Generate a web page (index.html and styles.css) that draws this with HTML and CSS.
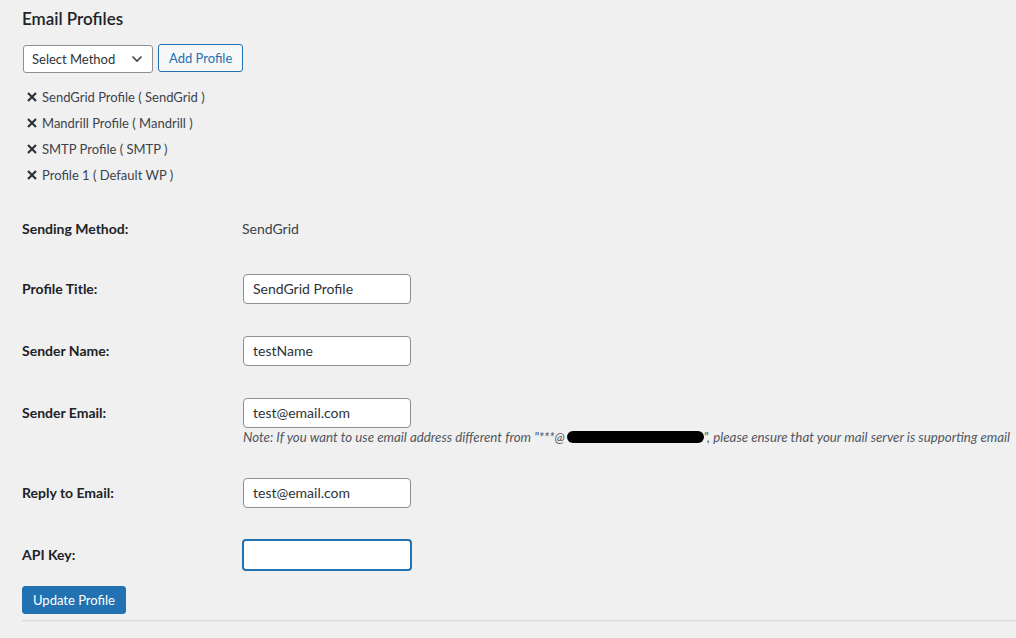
FILE: index.html
```html
<!DOCTYPE html>
<html>
<head>
<meta charset="utf-8">
<link rel="stylesheet" href="styles.css">
</head>
<body>
<div class="wrap">
  <h2 class="title">Email Profiles</h2>
  <div class="toolbar">
    <div class="select">
      <span>Select Method</span>
      <svg class="chev" width="12" height="8" viewBox="0 0 12 8"><path d="M1.5 1.5 L6 6 L10.5 1.5" fill="none" stroke="#3c434a" stroke-width="1.6"/></svg>
    </div>
    <button class="btn-secondary">Add Profile</button>
  </div>
  <ul class="profiles">
    <li><svg class="x" width="10" height="10" viewBox="0 0 10 10"><path d="M1 1 L9 9 M9 1 L1 9" stroke="#2c3338" stroke-width="2.2"/></svg>SendGrid Profile ( SendGrid )</li>
    <li><svg class="x" width="10" height="10" viewBox="0 0 10 10"><path d="M1 1 L9 9 M9 1 L1 9" stroke="#2c3338" stroke-width="2.2"/></svg>Mandrill Profile ( Mandrill )</li>
    <li><svg class="x" width="10" height="10" viewBox="0 0 10 10"><path d="M1 1 L9 9 M9 1 L1 9" stroke="#2c3338" stroke-width="2.2"/></svg>SMTP Profile ( SMTP )</li>
    <li><svg class="x" width="10" height="10" viewBox="0 0 10 10"><path d="M1 1 L9 9 M9 1 L1 9" stroke="#2c3338" stroke-width="2.2"/></svg>Profile 1 ( Default WP )</li>
  </ul>
  <div class="form">
    <div class="row row-first">
      <div class="label">Sending Method:</div>
      <div class="field"><span class="value">SendGrid</span></div>
    </div>
    <div class="row">
      <div class="label">Profile Title:</div>
      <div class="field"><div class="input">SendGrid Profile</div></div>
    </div>
    <div class="row">
      <div class="label">Sender Name:</div>
      <div class="field"><div class="input">testName</div></div>
    </div>
    <div class="row">
      <div class="label">Sender Email:</div>
      <div class="field">
        <div class="input">test@email.com</div>
        <p class="note">Note: If you want to use email address different from "***@<span class="redact"></span>", please ensure that your mail server is supporting email</p>
      </div>
    </div>
    <div class="row">
      <div class="label">Reply to Email:</div>
      <div class="field"><div class="input">test@email.com</div></div>
    </div>
    <div class="row">
      <div class="label">API Key:</div>
      <div class="field"><div class="input focus"></div></div>
    </div>
  </div>
  <button class="btn-primary">Update Profile</button>
  <div class="divider"></div>
</div>
</body>
</html>
```
FILE: styles.css
```css
html, body {
  margin: 0;
  padding: 0;
  background: #f0f0f1;
  overflow: hidden;
}
body {
  font-family: "Lato", "Liberation Sans", sans-serif;
  font-size: 13px;
  color: #3c434a;
}
.wrap {
  padding: 8px 0 0 22px;
  white-space: nowrap;
}
.title {
  margin: 0;
  font-size: 17px;
  line-height: 22px;
  font-weight: 600;
  color: #1d2327;
}
.toolbar {
  display: flex;
  align-items: center;
  gap: 5px;
  margin-top: 14px;
  height: 28px;
}
.select {
  box-sizing: border-box;
  width: 130px;
  height: 28px;
  margin-left: 1px;
  margin-top: 1px;
  border: 1px solid #8c8f94;
  border-radius: 3px;
  background: #fff;
  display: flex;
  align-items: center;
  justify-content: space-between;
  padding: 0 9px 0 8px;
  color: #2c3338;
  font-size: 13px;
}
.btn-secondary {
  box-sizing: border-box;
  height: 28px;
  margin-top: -1px;
  padding: 0 10px;
  border: 1px solid #2271b1;
  border-radius: 3px;
  background: #f6f7f7;
  color: #2271b1;
  font-family: inherit;
  font-size: 13px;
}
.profiles {
  list-style: none;
  margin: 12px 0 0 0;
  padding: 0 0 0 5px;
}
.profiles li {
  display: flex;
  align-items: center;
  height: 26px;
  color: #3c434a;
}
.x {
  flex: none;
  margin-right: 5px;
}
.form {
  margin-top: 12px;
  font-size: 14px;
}
.row {
  display: grid;
  grid-template-columns: 220px auto;
  align-items: start;
  padding: 16px 0;
}
.row-first {
  padding: 14px 0 14px;
}
.label {
  line-height: 30px;
  font-weight: 700;
  color: #1d2327;
}
.field {
  min-height: 30px;
}
.value {
  display: block;
  line-height: 30px;
  color: #3c434a;
}
.input {
  box-sizing: border-box;
  width: 168px;
  height: 30px;
  margin-left: 1px;
  border: 1px solid #8c8f94;
  border-radius: 4px;
  background: #fff;
  padding: 0 9px;
  line-height: 28px;
  color: #2c3338;
}
.input.focus {
  width: 170px;
  height: 32px;
  margin-left: 0;
  margin-top: -1px;
  margin-bottom: -1px;
  border: 2px solid #2271b1;
}
.note {
  margin: 0 0 0 1px;
  font-style: italic;
  font-size: 13.3px;
  line-height: 18px;
  color: #50575e;
}
.redact {
  display: inline-block;
  width: 137px;
  height: 12px;
  background: #000;
  border-radius: 6px;
  vertical-align: -1px;
  margin-left: 2px;
}
.btn-primary {
  display: block;
  box-sizing: border-box;
  height: 28px;
  padding: 0 10px;
  border: 1px solid #2271b1;
  border-radius: 3px;
  background: #2271b1;
  color: #fff;
  font-family: inherit;
  font-size: 13px;
  margin-top: 0;
}
.divider {
  height: 1px;
  background: #dcdcde;
  border-bottom: 1px solid #e8e8e9;
  margin-top: 6px;
}
```
